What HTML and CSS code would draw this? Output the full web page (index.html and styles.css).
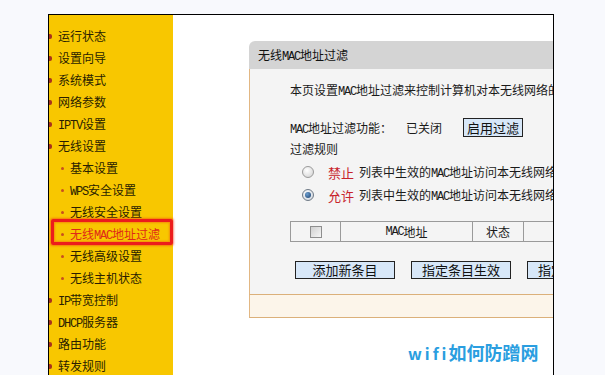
FILE: index.html
```html
<!DOCTYPE html>
<html lang="zh-CN">
<head>
<meta charset="utf-8">
<title>无线MAC地址过滤</title>
<link rel="stylesheet" href="styles.css">
</head>
<body>
<div class="frame">
  <nav class="sidebar">
    <ul class="menu">
      <li class="item">运行状态</li>
      <li class="item">设置向导</li>
      <li class="item">系统模式</li>
      <li class="item">网络参数</li>
      <li class="item"><span class="en">IPTV</span>设置</li>
      <li class="item">无线设置</li>
      <li class="item sub">基本设置</li>
      <li class="item sub"><span class="en">WPS</span>安全设置</li>
      <li class="item sub">无线安全设置</li>
      <li class="item sub active">无线<span class="en">MAC</span>地址过滤</li>
      <li class="item sub">无线高级设置</li>
      <li class="item sub">无线主机状态</li>
      <li class="item"><span class="en">IP</span>带宽控制</li>
      <li class="item"><span class="en">DHCP</span>服务器</li>
      <li class="item">路由功能</li>
      <li class="item">转发规则</li>
    </ul>
  </nav>
  <main class="main">
    <section class="panel">
      <header class="panel-head">无线<span class="en">MAC</span>地址过滤</header>
      <div class="panel-body">
        <p class="intro">本页设置<span class="en">MAC</span>地址过滤来控制计算机对本无线网络的访问。</p>
        <div class="status-row">
          <span class="label"><span class="en">MAC</span>地址过滤功能：</span>
          <span class="state">已关闭</span>
          <button class="btn small">启用过滤</button>
        </div>
        <div class="rules">过滤规则</div>
        <div class="radio-row">
          <span class="radio"></span>
          <span class="kw">禁止</span>
          <span class="desc">列表中生效的<span class="en">MAC</span>地址访问本无线网络</span>
        </div>
        <div class="radio-row second">
          <span class="radio checked"></span>
          <span class="kw">允许</span>
          <span class="desc">列表中生效的<span class="en">MAC</span>地址访问本无线网络</span>
        </div>
        <div class="table">
          <div class="cell c-check"><span class="checkbox"></span></div>
          <div class="cell c-mac"><span class="en">MAC</span>地址</div>
          <div class="cell c-state">状态</div>
          <div class="cell c-more">描述</div>
        </div>
        <div class="actions">
          <button class="btn">添加新条目</button>
          <button class="btn">指定条目生效</button>
          <button class="btn">指定条目失效</button>
        </div>
      </div>
      <div class="panel-foot"></div>
    </section>
  </main>
</div>
<div class="watermark"><span class="wf">wifi</span>如何防蹭网</div>
</body>
</html>
```

FILE: styles.css
```css
* { box-sizing: border-box; }

html, body {
  margin: 0;
  padding: 0;
  height: 375px;
  overflow: hidden;
}

body {
  background: #f8f9fd;
  font-family: "Noto Sans CJK SC", "Noto Sans", sans-serif;
  font-size: 12px;
  color: #1a1a1a;
  position: relative;
}

.en {
  font-family: "Liberation Mono", monospace;
  letter-spacing: -1.2px;
  font-size: 12px;
}

.frame {
  margin: 14px 0 0 48px;
  width: 506px;
  height: 361px;
  border: 1px solid #000;
  border-bottom: none;
  display: flex;
  overflow: hidden;
  background: #fff;
}

.sidebar {
  width: 124px;
  flex: none;
  background: #f8c700;
  padding-top: 10px;
}

.menu {
  list-style: none;
  margin: 0;
  padding: 0;
}

.item {
  position: relative;
  height: 22px;
  line-height: 22px;
  padding-left: 9px;
  color: #2a1e00;
  white-space: nowrap;
}

.item::before {
  content: "";
  position: absolute;
  left: 0;
  top: 9px;
  width: 3px;
  height: 5px;
  background: #a8321c;
  border-radius: 0 2px 2px 0;
}

.item.sub {
  padding-left: 21px;
}

.item.sub::before {
  left: 12px;
  top: 10px;
  width: 3px;
  height: 3px;
  border-radius: 50%;
  background: #c8501e;
}

.item.active {
  color: #e02a18;
}

.item.active::after {
  content: "";
  position: absolute;
  left: 2px;
  right: 0;
  top: -4px;
  bottom: 0;
  border: 3px solid #ec1c1c;
  border-radius: 2px;
  box-shadow: 0 0 2px 1px rgba(240, 60, 20, 0.55), inset 0 0 2px 1px rgba(240, 60, 20, 0.4);
}

.main {
  flex: 1;
  padding: 26px 0 0 76px;
  min-width: 0;
}

.panel {
  width: 420px;
}

.panel-head {
  height: 28px;
  line-height: 28px;
  background: #d4d4d4;
  padding-left: 9px;
  border-radius: 6px 0 0 0;
  color: #111;
  white-space: nowrap;
}

.panel-body {
  background: #f4f4f4;
  border-left: 1px solid #e2b783;
  padding: 12px 0 15px 40px;
  white-space: nowrap;
}

.intro {
  margin: 0;
  height: 18px;
  line-height: 18px;
}

.status-row {
  margin-top: 19px;
  height: 19px;
  display: flex;
  align-items: center;
}

.label {
  width: 116px;
}

.state {
  width: 57px;
}

.btn {
  font-family: "Noto Sans CJK SC", sans-serif;
  font-size: 13px;
  height: 18px;
  line-height: 16px;
  padding: 0;
  background: #d7e7f8;
  border: 1px solid #222;
  color: #111;
  width: 100px;
  margin: 0;
}

.btn.small {
  width: 60px;
  height: 19px;
  font-size: 13px;
}

.rules {
  margin-top: 4px;
  height: 16px;
  line-height: 16px;
}

.radio-row {
  margin-top: 6px;
  height: 18px;
  display: flex;
  align-items: center;
  padding-left: 12px;
}

.radio-row.second {
  margin-top: 5px;
}

.radio {
  width: 12px;
  height: 12px;
  border-radius: 50%;
  border: 1px solid #9a9a9a;
  background: radial-gradient(circle at 40% 35%, #ffffff, #cfcfcf);
  margin-right: 14px;
  position: relative;
}

.radio.checked {
  background: radial-gradient(circle at 40% 35%, #ffffff, #c8d0da);
  border-color: #6f7a86;
}

.radio.checked::after {
  content: "";
  position: absolute;
  left: 2px;
  top: 2px;
  width: 6px;
  height: 6px;
  border-radius: 50%;
  background: radial-gradient(circle at 35% 35%, #6b9ed0, #1c3f6a);
}

.kw {
  color: #c8232b;
  font-size: 13px;
  margin-right: 5px;
}

.desc {
  font-size: 12px;
}

.table {
  margin-top: 17px;
  height: 21px;
  display: flex;
  border: 1px solid #9a9a9a;
  background: #f4f4f4;
}

.cell {
  height: 100%;
  display: flex;
  align-items: center;
  justify-content: center;
  border-right: 1px solid #9a9a9a;
}

.c-check { width: 50px; }
.c-mac { width: 132px; }
.c-state { width: 51px; }
.c-more { width: 120px; border-right: none; }

.checkbox {
  width: 12px;
  height: 12px;
  border: 1px solid #8e8e8e;
  background: linear-gradient(135deg, #d0d0d0, #f6f6f6);
}

.actions {
  margin-top: 19px;
  display: flex;
  gap: 16px;
  padding-left: 5px;
}

.panel-foot {
  height: 24px;
  background: #fcf5ea;
  border-top: 1px solid #dbb07a;
  border-bottom: 1px solid #dbb07a;
  border-left: 1px solid #e2b783;
}

.watermark {
  position: absolute;
  left: 408px;
  top: 340px;
  height: 24px;
  line-height: 24px;
  font-size: 18px;
  font-weight: bold;
  color: #2a9ee0;
  font-family: "Noto Sans CJK SC", sans-serif;
  white-space: nowrap;
}

.wf {
  font-size: 16px;
  letter-spacing: 3px;
  margin-right: -1px;
}
```
